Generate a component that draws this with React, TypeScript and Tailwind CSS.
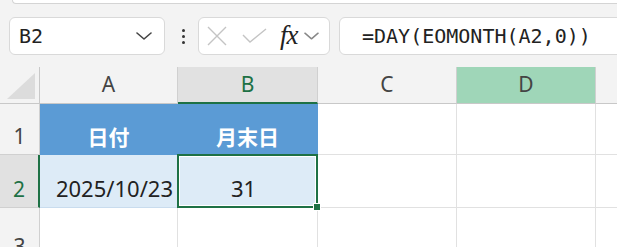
import React from "react";

const grid = "border-r border-b border-[#e1e1e1]";

function Chevron({ className, w, h }: { className: string; w: number; h: number }) {
  return (
    <svg width={w} height={h} viewBox="0 0 16 8" className={className} fill="none">
      <path d="M1 1 L8 7 L15 1" stroke="currentColor" strokeWidth="1.6" strokeLinecap="round" strokeLinejoin="round" />
    </svg>
  );
}

export default function App() {
  const sans = { fontFamily: '"Noto Sans", "Noto Sans CJK JP", sans-serif' };

  return (
    <div className="w-[617px] h-[247px] overflow-hidden bg-[#f3f3f3] flex flex-col" style={sans}>
      {/* ribbon bottom edge */}
      <div className="h-[4px] ml-[12px] bg-white border-b border-l border-[#d4d4d4] rounded-bl-[6px]" />

      {/* formula bar */}
      <div className="flex items-center h-[38px] mt-[13px]">
        <div className="ml-[9px] w-[156px] h-[38px] bg-white border border-[#d9d9d9] rounded-[6px] flex items-center pl-[9px] pr-[12px]">
          <span className="text-[20px] leading-none text-[#222]" style={{ fontFamily: '"DejaVu Sans Mono", monospace' }}>
            B2
          </span>
          <Chevron w={16} h={8} className="ml-auto text-[#444]" />
        </div>

        <div className="ml-[16px] w-[4px] flex flex-col items-center gap-[3px]">
          <span className="w-[3px] h-[3px] rounded-full bg-[#333]" />
          <span className="w-[3px] h-[3px] rounded-full bg-[#333]" />
          <span className="w-[3px] h-[3px] rounded-full bg-[#333]" />
        </div>

        <div className="ml-[13px] w-[132px] h-[38px] bg-white border border-[#d9d9d9] rounded-[6px] flex items-center pl-[8px]">
          <svg width="20" height="20" viewBox="0 0 20 20" fill="none" className="text-[#c4c4c4]">
            <path d="M1 1 L19 19 M19 1 L1 19" stroke="currentColor" strokeWidth="1.4" />
          </svg>
          <svg width="25" height="16" viewBox="0 0 25 16" fill="none" className="ml-[15px] text-[#c4c4c4]">
            <path d="M1 7 L8 14 L24 1" stroke="currentColor" strokeWidth="1.4" />
          </svg>
          <span
            className="ml-[13px] text-[27px] leading-none italic text-[#222] tracking-[-1px] -mt-[2px]"
            style={{ fontFamily: '"Liberation Serif", serif' }}
          >
            fx
          </span>
          <Chevron w={15} h={8} className="ml-[6px] text-[#888]" />
        </div>

        <div className="ml-[9px] flex-1 -mr-[20px] h-[38px] bg-white border border-[#d9d9d9] rounded-[6px] flex items-center pl-[22px]">
          <span className="text-[20px] leading-none text-[#222]" style={{ fontFamily: '"DejaVu Sans Mono", monospace' }}>
            =DAY(EOMONTH(A2,0))
          </span>
        </div>
      </div>

      {/* sheet */}
      <div className="mt-[12px] grid grid-cols-[40px_138px_140px_139px_139px_40px] grid-rows-[37px_51px_53px_39px] bg-white">
        {/* header row */}
        <div className="bg-[#f3f3f3] border-r border-b border-[#c8c8c8] flex items-end justify-end pr-[4px] pb-[4px]">
          <svg width="28" height="26" viewBox="0 0 28 26">
            <path d="M28 0 L28 26 L0 26 Z" fill="#dcdcdc" />
          </svg>
        </div>
        <div className="bg-[#f3f3f3] border-r border-b border-[#d0d0d0] border-b-[#c8c8c8] flex items-center justify-center text-[21px] text-[#444]">
          A
        </div>
        <div className="bg-[#e1e1e1] border-r border-[#d0d0d0] border-b-2 border-b-[#1e7145] flex items-center justify-center text-[21px] text-[#1e7145]">
          B
        </div>
        <div className="bg-[#f3f3f3] border-r border-b border-[#d0d0d0] border-b-[#c8c8c8] flex items-center justify-center text-[21px] text-[#444]">
          C
        </div>
        <div className="bg-[#9fd6b8] border-r border-b border-[#d0d0d0] border-b-[#c8c8c8] flex items-center justify-center text-[21px] text-[#444]">
          D
        </div>
        <div className="bg-[#f3f3f3] border-b border-[#c8c8c8]" />

        {/* row 1 */}
        <div className="bg-[#f3f3f3] border-r border-b border-[#d0d0d0] flex items-end justify-center pb-[7px] text-[21px] leading-none text-[#444]">
          1
        </div>
        <div className="bg-[#5b9bd5] border-r border-b border-[#5b9bd5] flex items-end justify-center pb-[6px] text-[21px] font-bold leading-none text-white">
          日付
        </div>
        <div className="bg-[#5b9bd5] border-r border-b border-[#5b9bd5] flex items-end justify-center pb-[6px] text-[21px] font-bold leading-none text-white">
          月末日
        </div>
        <div className={grid} />
        <div className={grid} />
        <div className="border-b border-[#e1e1e1]" />

        {/* row 2 */}
        <div className="bg-[#e1e1e1] border-b border-[#d0d0d0] border-r-2 border-r-[#1e7145] flex items-end justify-center pb-[7px] text-[21px] leading-none text-[#1e7145]">
          2
        </div>
        <div className="bg-[#ddebf7] border-r border-b border-[#c9dcee] flex items-end justify-end pr-[4px] pb-[8px] text-[22px] leading-none text-[#222]">
          2025/10/23
        </div>
        <div className="relative bg-[#ddebf7] border-r border-b border-[#c9dcee] flex items-end justify-center pb-[8px] text-[22px] leading-none text-[#222]">
          <span className="-ml-[8px]">31</span>
          <div className="absolute -left-[1px] -top-[1px] -right-[1px] -bottom-[1px] border-2 border-[#1e7145]">
            <div className="w-full h-full border border-white" />
          </div>
          <div className="absolute -right-[4px] -bottom-[4px] w-[8px] h-[8px] bg-[#1e7145] border border-white" />
        </div>
        <div className={grid} />
        <div className={grid} />
        <div className="border-b border-[#e1e1e1]" />

        {/* row 3 */}
        <div className="bg-[#f3f3f3] border-r border-[#d0d0d0] flex items-end justify-center text-[21px] leading-none text-[#444] overflow-hidden">
          <span className="translate-y-[10px]">3</span>
        </div>
        <div className="border-r border-[#e1e1e1]" />
        <div className="border-r border-[#e1e1e1]" />
        <div className="border-r border-[#e1e1e1]" />
        <div className="border-r border-[#e1e1e1]" />
        <div />
      </div>
    </div>
  );
}
